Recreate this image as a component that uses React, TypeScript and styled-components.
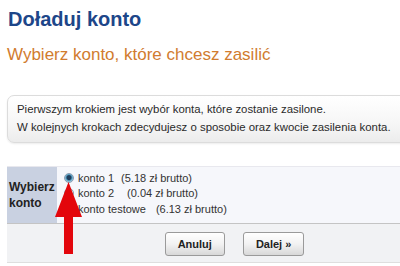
import React, { useState } from "react";
import styled, { createGlobalStyle } from "styled-components";

const GlobalStyle = createGlobalStyle`
  html, body {
    margin: 0;
    padding: 0;
    background: #ffffff;
    overflow: hidden;
  }
  body {
    font-family: "Liberation Sans", Arial, sans-serif;
    color: #222;
  }
`;

const Page = styled.div`
  width: 455px;
  padding: 7px 0 0 7px;
  position: relative;
`;

const Title = styled.h1`
  margin: 0 0 0 1px;
  font-size: 20px;
  line-height: 24px;
  font-weight: bold;
  color: #1d4689;
`;

const Subtitle = styled.h2`
  margin: 14px 0 0 0;
  font-size: 17px;
  line-height: 20px;
  font-weight: normal;
  color: #d17c2f;
`;

const InfoBox = styled.div`
  margin-top: 30px;
  padding: 4px 9px 6px 9px;
  border: 1px solid #dcdcdc;
  border-radius: 7px;
  background: linear-gradient(to bottom, #ffffff 0%, #f6f6f6 60%, #ececec 100%);
  box-shadow: 0 1px 2px rgba(0, 0, 0, 0.08);
  font-size: 11.4px;
  line-height: 18px;
  color: #2a2a2a;
`;

const Form = styled.div`
  margin-top: 23px;
  border-top: 1px solid #e8e8ee;
`;

const Row = styled.div`
  display: flex;
  border-bottom: 1px solid #c4c4c4;
`;

const LabelCell = styled.div`
  width: 50px;
  flex-shrink: 0;
  background: #c9d1e1;
  font-size: 12px;
  font-weight: bold;
  line-height: 16px;
  color: #222;
  padding: 12px 0 12px 2px;
  box-sizing: border-box;
`;

const OptionsCell = styled.div`
  flex: 1;
  background: #f6f7fb;
  padding: 3px 0 4px 7px;
`;

const Option = styled.label`
  display: flex;
  align-items: center;
  height: 15.5px;
  font-size: 11px;
  color: #333;
  cursor: pointer;
`;

const Radio = styled.span<{ checked: boolean }>`
  width: 8px;
  height: 8px;
  border-radius: 50%;
  border: 1px solid #8a9bb0;
  margin-right: 4px;
  flex-shrink: 0;
  background: ${({ checked }) =>
    checked
      ? "radial-gradient(circle at 50% 45%, #1f3d5c 0 2px, #4f9cc0 3px, #d4e6f1 5px)"
      : "linear-gradient(#e8e8e8, #ffffff)"};
`;

const Amount = styled.span<{ gap: number }>`
  margin-left: ${({ gap }) => gap}px;
`;

const ButtonBar = styled.div`
  display: flex;
  justify-content: center;
  gap: 18px;
  padding: 8px 0 6px 0;
  background: #f1f2f4;
  border-bottom: 1px solid #dedede;
`;

const Button = styled.button`
  height: 24px;
  padding: 0 12px;
  font-family: "Liberation Sans", Arial, sans-serif;
  font-size: 11px;
  font-weight: bold;
  color: #222;
  border: 1px solid #9a9a9a;
  border-radius: 3px;
  background: linear-gradient(to bottom, #ffffff 0%, #f2f2f2 50%, #d8d8d8 100%);
  cursor: pointer;
`;

const Arrow = styled.svg`
  position: absolute;
  left: 55px;
  top: 182px;
  pointer-events: none;
`;

const accounts = [
  { name: "konto 1", amount: "(5.18 zł brutto)", gap: 7 },
  { name: "konto 2", amount: "(0.04 zł brutto)", gap: 13 },
  { name: "konto testowe", amount: "(6.13 zł brutto)", gap: 10 },
];

export default function App() {
  const [selected, setSelected] = useState(0);

  return (
    <>
      <GlobalStyle />
      <Page>
        <Title>Doładuj konto</Title>
        <Subtitle>Wybierz konto, które chcesz zasilić</Subtitle>
        <InfoBox>
          Pierwszym krokiem jest wybór konta, które zostanie zasilone.
          <br />
          W kolejnych krokach zdecydujesz o sposobie oraz kwocie zasilenia konta.
        </InfoBox>
        <Form>
          <Row>
            <LabelCell>
              Wybierz
              <br />
              konto
            </LabelCell>
            <OptionsCell>
              {accounts.map((a, i) => (
                <Option key={a.name} onClick={() => setSelected(i)}>
                  <Radio checked={selected === i} />
                  {a.name}
                  <Amount gap={a.gap}>{a.amount}</Amount>
                </Option>
              ))}
            </OptionsCell>
          </Row>
          <ButtonBar>
            <Button>Anuluj</Button>
            <Button>Dalej »</Button>
          </ButtonBar>
        </Form>
        <Arrow width="28" height="74" viewBox="0 0 28 74">
          <polygon points="13.5,0 27,35 18,35 18,72 9,72 9,35 0,35" fill="#e3060c" />
        </Arrow>
      </Page>
    </>
  );
}
